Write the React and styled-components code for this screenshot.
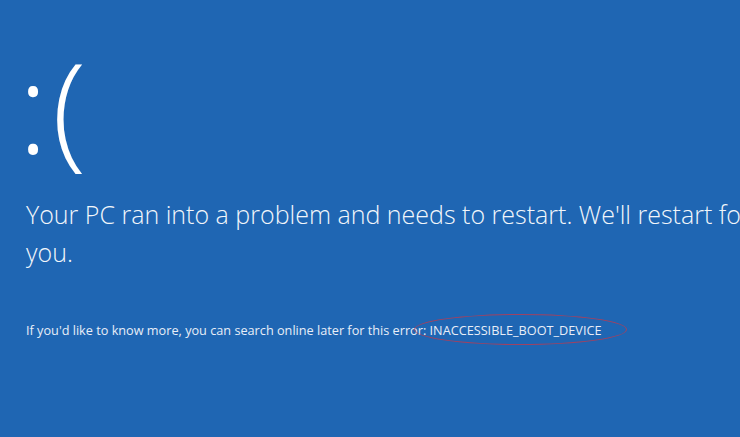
import React from 'react';
import styled, { createGlobalStyle } from 'styled-components';

const GlobalStyle = createGlobalStyle`
  html, body {
    margin: 0;
    padding: 0;
    background: #1f66b3;
    overflow: hidden;
  }
`;

const Screen = styled.div`
  width: 740px;
  height: 437px;
  background: #1f66b3;
  color: #ffffff;
  font-family: "Open Sans", "Segoe UI", sans-serif;
  font-weight: 300;
  overflow: hidden;
  position: relative;
  padding: 30px 0 0 22px;
  box-sizing: border-box;
`;

const Face = styled.div`
  margin-left: -4px;
  font-size: 126px;
  line-height: 150px;
  font-weight: 300;
  height: 150px;
  letter-spacing: 4px;
`;

const Message = styled.p`
  margin: 15px 0 0 4px;
  width: 760px;
  font-size: 25px;
  line-height: 38px;
  color: #f2f6fb;
`;

const Detail = styled.p`
  position: relative;
  margin: 50px 0 0 4px;
  font-size: 12.7px;
  font-weight: 400;
  color: #e8eef8;
  white-space: nowrap;
`;

const Code = styled.span`
  position: relative;
`;

const Circle = styled.span`
  position: absolute;
  left: -16px;
  right: -26px;
  top: -7px;
  bottom: -6px;
  border: 1px solid #c03a4e;
  border-radius: 50%;
  opacity: 0.8;
`;

export default function App() {
  return (
    <>
      <GlobalStyle />
      <Screen>
        <Face>:(</Face>
        <Message>
          Your PC ran into a problem and needs to restart. We'll restart for you.
        </Message>
        <Detail>
          If you'd like to know more, you can search online later for this error:{' '}
          <Code>
            INACCESSIBLE_BOOT_DEVICE
            <Circle />
          </Code>
        </Detail>
      </Screen>
    </>
  );
}
